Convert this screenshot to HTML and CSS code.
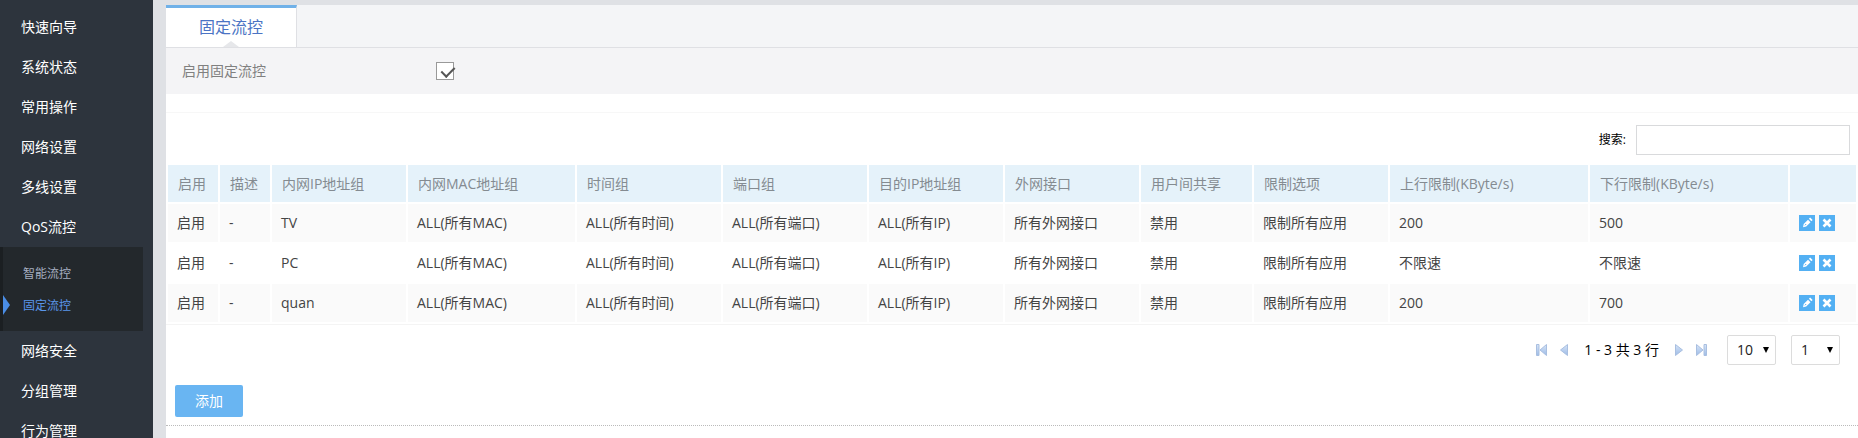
FILE: index.html
```html
<!DOCTYPE html>
<html lang="zh-CN">
<head>
<meta charset="utf-8">
<title>固定流控</title>
<link rel="stylesheet" href="styles.css">
</head>
<body>
<svg class="sprite" aria-hidden="true">
  <symbol id="edit" viewBox="0 0 16 16"><path d="M4 12.300l.7-3.300 4.300-4.300 2.500 2.500-4.300 4.300z" fill="#fff"/><path d="M9.900 3.800l1.200-1.200 2.500 2.500-1.200 1.200z" fill="#fff"/><path d="M5.900 10.300l1.300-1.300" stroke="#53b0f3" stroke-width="1"/></symbol>
  <symbol id="remove" viewBox="0 0 16 16"><path d="M4.500 4.500l7 7M11.500 4.500l-7 7" stroke="#fff" stroke-width="2.600"/></symbol>
  <symbol id="prev" viewBox="0 0 8 12"><path d="M7.500.5v11L.5 6z" fill="url(#blue)" stroke="#a9bfe0"/></symbol>
  <symbol id="first" viewBox="0 0 12 12"><path d="M.5.500h2.500v11h-2.500zM10.500.500v11L4 6z" fill="url(#blue)" stroke="#a9bfe0"/></symbol>
  <linearGradient id="blue" x1="0" y1="0" x2="0" y2="1"><stop offset="0" stop-color="#d7e5f8"/><stop offset="1" stop-color="#9dbbe6"/></linearGradient>
</svg>
<div class="layout">
  <nav class="sidebar">
    <a class="nav-item" href="#">快速向导</a>
    <a class="nav-item" href="#">系统状态</a>
    <a class="nav-item" href="#">常用操作</a>
    <a class="nav-item" href="#">网络设置</a>
    <a class="nav-item" href="#">多线设置</a>
    <a class="nav-item" href="#">QoS流控</a>
    <div class="submenu">
      <a class="sub-item" href="#">智能流控</a>
      <a class="sub-item active" href="#">固定流控</a>
    </div>
    <a class="nav-item" href="#">网络安全</a>
    <a class="nav-item" href="#">分组管理</a>
    <a class="nav-item" href="#">行为管理</a>
  </nav>
  <main class="content">
    <div class="tabs"><a class="tab" href="#">固定流控</a></div>
    <div class="option">
      <label class="option-label" for="enable">启用固定流控</label>
      <input class="check" id="enable" type="checkbox" checked>
    </div>
    <div class="spacer"></div>
    <div class="search">
      <label for="search">搜索:</label>
      <input class="search-input" id="search" type="text">
    </div>
    <table class="rules">
      <colgroup><col class="c-s"><col class="c-s"><col class="c-m"><col class="c-mac"><col class="c-l"><col class="c-l"><col class="c-m"><col class="c-m"><col class="c-share"><col class="c-m"><col class="c-xl"><col class="c-xl"><col class="c-act"></colgroup>
      <thead>
        <tr><th>启用</th><th>描述</th><th>内网IP地址组</th><th>内网MAC地址组</th><th>时间组</th><th>端口组</th><th>目的IP地址组</th><th>外网接口</th><th>用户间共享</th><th>限制选项</th><th>上行限制(KByte/s)</th><th>下行限制(KByte/s)</th><th></th></tr>
      </thead>
      <tbody>
        <tr><td>启用</td><td>-</td><td>TV</td><td>ALL(所有MAC)</td><td>ALL(所有时间)</td><td>ALL(所有端口)</td><td>ALL(所有IP)</td><td>所有外网接口</td><td>禁用</td><td>限制所有应用</td><td>200</td><td>500</td><td><div class="actions"><button class="act" aria-label="编辑"><svg><use href="#edit"/></svg></button><button class="act" aria-label="删除"><svg><use href="#remove"/></svg></button></div></td></tr>
        <tr><td>启用</td><td>-</td><td>PC</td><td>ALL(所有MAC)</td><td>ALL(所有时间)</td><td>ALL(所有端口)</td><td>ALL(所有IP)</td><td>所有外网接口</td><td>禁用</td><td>限制所有应用</td><td>不限速</td><td>不限速</td><td><div class="actions"><button class="act" aria-label="编辑"><svg><use href="#edit"/></svg></button><button class="act" aria-label="删除"><svg><use href="#remove"/></svg></button></div></td></tr>
        <tr><td>启用</td><td>-</td><td>quan</td><td>ALL(所有MAC)</td><td>ALL(所有时间)</td><td>ALL(所有端口)</td><td>ALL(所有IP)</td><td>所有外网接口</td><td>禁用</td><td>限制所有应用</td><td>200</td><td>700</td><td><div class="actions"><button class="act" aria-label="编辑"><svg><use href="#edit"/></svg></button><button class="act" aria-label="删除"><svg><use href="#remove"/></svg></button></div></td></tr>
      </tbody>
    </table>
    <div class="pager">
      <div class="pages">
        <button class="page end" aria-label="首页"><svg><use href="#first"/></svg></button>
        <button class="page" aria-label="上一页"><svg><use href="#prev"/></svg></button>
        <span class="range">1 - 3 共 3 行</span>
        <button class="page next" aria-label="下一页"><svg><use href="#prev"/></svg></button>
        <button class="page end next" aria-label="末页"><svg><use href="#first"/></svg></button>
      </div>
      <span class="picker"><select aria-label="每页行数"><option>10</option></select></span>
      <span class="picker"><select aria-label="页码"><option>1</option></select></span>
    </div>
    <div class="footer"><button class="add">添加</button></div>
  </main>
</div>
</body>
</html>
```
FILE: styles.css
```css
* { box-sizing: border-box; }
body {
  margin: 0;
  background: #dfe1e5;
  font: 14px/20px "Open Sans", "Noto Sans CJK SC", sans-serif;
  color: #444;
  overflow: hidden;
}
a { text-decoration: none; }
button { border: 0; padding: 0; font: inherit; cursor: pointer; }
.sprite { position: absolute; width: 0; height: 0; }
.layout { display: flex; height: 100vh; overflow: hidden; }

.sidebar { flex: 0 0 153px; padding-top: 7px; background: #2d343d; }
.nav-item { display: block; padding-left: 21px; line-height: 40px; color: #fff; }
.submenu {
  width: 143px;
  padding: 11px 0 9px;
  background: #23282c;
  border-left: 3px solid #1b1f22;
}
.sub-item { display: block; padding-left: 20px; font-size: 12px; line-height: 32px; color: #a6afc1; }
.sub-item.active { position: relative; color: #5a96ea; }
.sub-item.active::before {
  content: "";
  position: absolute;
  left: 0;
  top: 5px;
  border: solid transparent;
  border-width: 10px 0 10px 7px;
  border-left-color: #4a8de6;
}

.content { flex: 1; min-width: 0; margin: 5px 0 0 13px; background: #fff; }
.tabs { display: flex; background: #f4f5f7; border-bottom: 1px solid #dfe0e4; }
.tab {
  position: relative;
  width: 131px;
  border-top: 3px solid #70b1e8;
  border-right: 1px solid #dfe0e4;
  background: #fff;
  text-align: center;
  font-size: 16px;
  line-height: 39px;
  color: #4b74c4;
}
.tab::after {
  content: "";
  position: absolute;
  left: 57px;
  bottom: 0;
  border: solid transparent;
  border-width: 0 8px 6px;
  border-bottom-color: #e6e7ea;
}
.option { display: flex; align-items: center; height: 46px; padding-left: 16px; background: #f4f4f6; color: #808080; }
.option-label { width: 254px; }
.check { appearance: none; position: relative; width: 18px; height: 18px; margin: 0; border: 1px solid #999; background: #fff; }
.check:checked::after {
  content: "";
  position: absolute;
  left: 7px;
  top: 1px;
  width: 6px;
  height: 11px;
  border: solid #555;
  border-width: 0 2px 2px 0;
  transform: rotate(45deg);
}
.spacer { height: 19px; border-bottom: 1px solid #f7f7f7; }
.search { display: flex; justify-content: flex-end; align-items: center; gap: 10px; padding: 12px 8px 8px; font-size: 12px; color: #000; }
.search-input { width: 214px; height: 30px; border: 1px solid #d9dadc; background: #fff; }

.rules { width: 100%; table-layout: fixed; border-spacing: 2px; border-bottom: 1px solid #f4f4f4; }
.rules th, .rules td { padding: 0 10px; text-align: left; font-weight: normal; white-space: nowrap; }
.rules td { padding: 0 9px; height: 38px; }
.rules th { height: 37px; background: #e5f2fa; color: #848b91; }
.rules tbody tr:nth-child(odd) td { background: #fafafa; }
.c-s { width: 50px; }
.c-m { width: 134px; }
.c-mac { width: 167px; }
.c-l { width: 144px; }
.c-share { width: 111px; }
.c-xl { width: 198px; }
.c-act { width: 66px; }
.actions { display: flex; gap: 4px; }
.act { width: 16px; height: 16px; background: #53b0f3; }
.act svg { display: block; width: 16px; height: 16px; }

.pager { display: flex; justify-content: flex-end; align-items: center; gap: 15px; padding: 10px 18px 20px 0; color: #000; }
.pages { display: flex; align-items: center; gap: 12px; margin-right: 5px; }
.range { margin: 0 4px; }
.page { width: 8px; height: 12px; background: none; }
.page.end { width: 12px; }
.page svg { display: block; width: 100%; height: 12px; }
.page.next svg { transform: scaleX(-1); }
.picker { position: relative; }
.picker select {
  appearance: none;
  display: block;
  width: 49px;
  height: 30px;
  padding: 0 9px;
  border: 1px solid #dcdcdc;
  border-radius: 2px;
  background: #fff;
  font: inherit;
  color: #222;
}
.picker::after {
  content: "";
  position: absolute;
  right: 7px;
  top: 12px;
  border: solid transparent;
  border-width: 6px 3px 0;
  border-top-color: #000;
  pointer-events: none;
}
.footer { padding: 0 9px 8px; border-bottom: 1px dotted #bbb; }
.add { display: block; width: 68px; height: 32px; border-radius: 2px; background: #69b5f2; color: #fff; }
```
